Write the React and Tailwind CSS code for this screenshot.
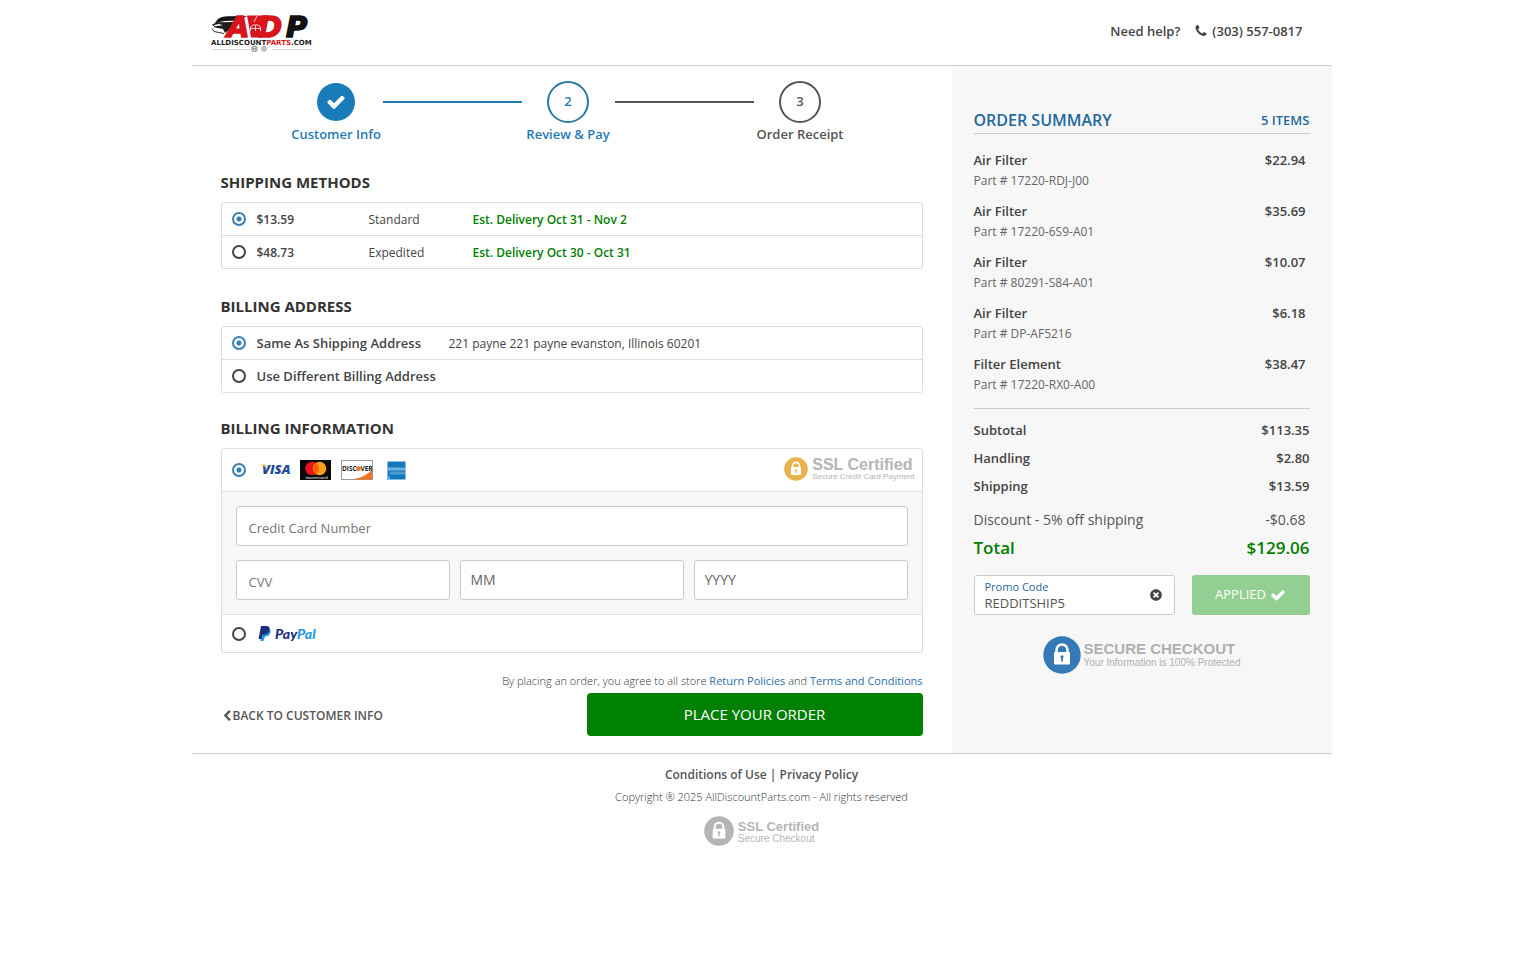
import { useState } from 'react';
import { FaTimesCircle } from 'react-icons/fa';

const steps = [
  { n: 1, label: 'Customer Info', state: 'done' },
  { n: 2, label: 'Review & Pay', state: 'current' },
  { n: 3, label: 'Order Receipt', state: 'todo' },
];

const shippingMethods = [
  { id: 'standard', price: '$13.59', name: 'Standard', eta: 'Est. Delivery Oct 31 - Nov 2' },
  { id: 'expedited', price: '$48.73', name: 'Expedited', eta: 'Est. Delivery Oct 30 - Oct 31' },
];

const items = [
  { name: 'Air Filter', part: '17220-RDJ-J00', price: '$22.94' },
  { name: 'Air Filter', part: '17220-6S9-A01', price: '$35.69' },
  { name: 'Air Filter', part: '80291-S84-A01', price: '$10.07' },
  { name: 'Air Filter', part: 'DP-AF5216', price: '$6.18' },
  { name: 'Filter Element', part: '17220-RX0-A00', price: '$38.47' },
];

const totals = [
  { label: 'Subtotal', value: '$113.35' },
  { label: 'Handling', value: '$2.80' },
  { label: 'Shipping', value: '$13.59' },
];

const stepStyles = {
  done: { text: 'text-[#1f7bb6]', circle: 'w-[38px] h-[38px] bg-[#1a7bb9] text-white' },
  current: { text: 'text-[#1f7bb6]', circle: 'w-[42px] h-[42px] border-2 border-[#2a7ba8] text-[13px] font-semibold' },
  todo: { text: 'text-[#555]', circle: 'w-[42px] h-[42px] border-2 border-[#555] text-[13px] font-semibold' },
};

const icons = {
  check: 'M1671 566q0 40-28 68l-724 724-136 136q-28 28-68 28t-68-28l-136-136-362-362q-28-28-28-68t28-68l136-136q28-28 68-28t68 28l294 295 656-657q28-28 68-28t68 28l136 136q28 28 28 68z',
  chevron: 'M1427 301l-531 531 531 531q19 19 19 45t-19 45l-166 166q-19 19-45 19t-45-19l-742-742q-19-19-19-45t19-45l742-742q19-19 45-19t45 19l166 166q19 19 19 45t-19 45z',
  phone: 'M1600 1240q0 27-10 70.500t-21 68.500q-21 50-122 106-94 51-186 51-27 0-53-3.500t-57.500-12.500-47-14.500-55.500-20.500-49-18q-98-35-175-83-127-79-264-216t-216-264q-48-77-83-175-3-9-18-49t-20.500-55.500-14.500-47-12.500-57.500-3.500-53q0-92 51-186 56-101 106-122 25-11 68.500-21t70.500-10q14 0 21 3 18 6 53 76 11 19 30 54t35 63.500 31 53.500q3 4 17.500 25t21.500 35.500 7 28.500q0 20-28.500 50t-62 55-62 53-28.500 46q0 9 5 22.500t8.500 20.500 14 24 11.500 19q76 137 174 235t235 174q2 1 19 11.500t24 14 20.500 8.500 22.500 5q18 0 46-28.500t53-62 55-62 50-28.500q14 0 28.500 7t35.500 21.500 25 17.500q25 15 53.500 31t63.500 35 54 30q70 35 76 53 3 7 3 21z',
};

const Icon = ({ name, className }) => (
  <svg className={className} viewBox="0 0 1792 1792" fill="currentColor" aria-hidden="true"><path d={icons[name]} /></svg>
);

const Logo = () => (
  <svg className="w-[102px] h-[46px]" viewBox="0 -6 102 46" role="img" aria-label="AllDiscountParts.com">
    {/* car */}
    <path d="M7 6 Q10 3.500 17 3.200 L36 3 L28 7.500 L14 8 Q8 8.500 3 11 Z" fill="#151515" />
    <path d="M1 11.500 L7 9.300 L25 9 L19 16 L14 20 L12 16 L4 14.500 Z" fill="#1c1c1c" />
    <path d="M3 12 L8 11 L12 12.300 L4 13.200 Z M5 16 L12 17.500 L12 19 L6 18 Z" fill="#fff" />
    <path d="M1 15.500 L3 18.500 L13 20.500" fill="none" stroke="#333" />
    <path d="M36 2.600 H57 L51 24.600 H40 Z" fill="#d8151b" />
    <g fontFamily="DejaVu Sans" fontWeight="700" fontStyle="italic" fontSize="29" strokeWidth="1.600">
      <text x="16" y="24" fill="#d8151b" stroke="#d8151b">A</text>
      <text x="47" y="24" fill="#d8151b" stroke="#d8151b">D</text>
      <text x="75" y="24" fill="#111" stroke="#111">P</text>
    </g>
    {/* house */}
    <path d="M39.500 18 v-4 l2.500-2 h5 l2.500 2 v4 M39.500 15.500 h10 M44.500 12.500 v5.500" fill="none" stroke="#fff" strokeWidth="0.800" />
    <path d="M46 3 L43 9" stroke="#fff" strokeWidth="0.800" />
    <text x="0" y="31.500" fontFamily="DejaVu Sans" fontWeight="700" fontSize="7" fill="#222">
      ALLDISCOUNT<tspan fill="#d8151b">PARTS</tspan>.COM
    </text>
    <path d="M1 36.500 h38 M61 36.500 h40" stroke="#ccc" strokeWidth="0.800" />
    <rect x="41" y="33.300" width="5" height="5" rx="1.500" fill="none" stroke="#555" strokeWidth="0.800" />
    <path d="M42.500 34.300 v3 M44.500 34.300 v3 M42.500 35.800 h2" stroke="#555" strokeWidth="0.600" />
    <circle cx="53" cy="35.800" r="2.300" fill="none" stroke="#777" strokeWidth="0.800" />
    <path d="M51.800 36.900 L53 34.400 L54.200 36.900" fill="none" stroke="#777" strokeWidth="0.700" />
  </svg>
);

const LockBadge = ({ color, className }) => (
  <svg className={className} viewBox="0 0 38 38" aria-hidden="true">
    <circle cx="19" cy="19" r="18.700" fill={color} />
    <path d="M13.500 18 v-4 a5.500 5.500 0 0 1 11 0 v4" fill="none" stroke="#fff" strokeWidth="2.600" />
    <rect x="11" y="16" width="16" height="12.500" rx="1" fill="#fff" />
    <circle cx="19" cy="20.800" r="1.600" fill={color} />
    <path d="M18.100 21 h1.800 v4.500 h-1.800 Z" fill={color} />
  </svg>
);

const CardLogos = () => (
  <span className="flex items-center">
    <svg className="w-[31px] h-[20px]" viewBox="0 0 31 20" role="img" aria-label="Visa">
      <text x="2" y="14" fontFamily="Open Sans" fontWeight="800" fontStyle="italic" fontSize="13" fill="#1c4a94">VISA</text>
      <path d="M1 4.500 h4 l2 4 Z" fill="#e9b44c" />
    </svg>
    <svg className="w-[31px] h-[20px] ml-[9px]" viewBox="0 0 31 20" role="img" aria-label="Mastercard">
      <rect width="31" height="20" fill="#0a0a0a" />
      <circle cx="12" cy="8.500" r="6.800" fill="#e8131d" />
      <circle cx="19.500" cy="8.500" r="6.800" fill="#f79e1b" />
      <path d="M15.750 2.800 a6.800 6.800 0 0 1 0 11.400 a6.800 6.800 0 0 1 0 -11.400" fill="#fb5f0a" />
      <text x="5.500" y="18.500" fontFamily="Open Sans" fontWeight="600" fontSize="4" fill="#ddd">mastercard</text>
    </svg>
    <svg className="w-[32px] h-[20px] ml-[10px]" viewBox="0 0 32 20" role="img" aria-label="Discover">
      <rect x="0.500" y="0.500" width="31" height="19" fill="#fff" stroke="#999" />
      <path d="M31 9.500 Q25 17 11 19.500 L31 19.500 Z" fill="#ee7623" />
      <text x="1" y="11" fontFamily="Open Sans" fontWeight="700" fontSize="6.500" fill="#1b1b1b">DISC</text>
      <circle cx="17.500" cy="8.700" r="2.400" fill="#ee7623" />
      <text x="19.500" y="11" fontFamily="Open Sans" fontWeight="700" fontSize="6.500" fill="#1b1b1b">VER</text>
    </svg>
    <svg className="w-[20px] h-[19px] ml-[13px]" viewBox="0 0 20 19" role="img" aria-label="American Express">
      <rect x="1.500" y="0.500" width="18" height="18" fill="#1478be" />
      <path d="M2 6.500 h17 v3 h-17 Z" fill="#6fb1df" />
      <path d="M4 10.500 h15 v3 h-15 Z" fill="#4d9cd4" />
      <path d="M0 19 L4 15 L4 18.500 Z" fill="#7fb9e2" />
    </svg>
  </span>
);

const PayPalLogo = () => (
  <svg className="w-[64px] h-[18px]" viewBox="0 0 64 18" role="img" aria-label="PayPal">
    <path d="M3.500 3.500 h6 Q13.500 4 12.300 8 Q11 11.500 7 11.500 L5.500 16 H2.500 Z" fill="#1f9bde" />
    <path d="M3 1 h6 Q12.500 1.500 11.600 5.500 Q10.500 9.500 6 9.500 H4.500 L3.400 14 H0.500 Z" fill="#1c2f7c" />
    <text x="17" y="14" fontFamily="Lato" fontWeight="900" fontStyle="italic" fontSize="14" fill="#1c2f7c">
      Pay<tspan fill="#1f9bde">Pal</tspan>
    </text>
  </svg>
);

const Radio = (props) => (
  <input
    type="radio"
    className="appearance-none shrink-0 w-[14px] h-[14px] rounded-full border-2 border-[#444] bg-white checked:border-[#3a80b4] checked:bg-[radial-gradient(circle,#2f7db5_2px,transparent_3px)]"
    {...props}
  />
);

const Heading = ({ children }) => <h2 className="text-[15px] leading-5 font-bold text-[#333]">{children}</h2>;

const inputClass = 'h-10 min-w-0 rounded-[3px] border border-[#ccc] bg-white px-3 pt-[3px] text-[13px] text-[#555] placeholder:text-[#777] outline-none';
const selectClass = 'appearance-none h-10 min-w-0 rounded-[3px] border border-[#ccc] bg-white px-[10px] text-sm text-[#666] outline-none';

const App = () => {
  const [shipping, setShipping] = useState('standard');
  const [billing, setBilling] = useState('same');
  const [payment, setPayment] = useState('card');
  const [promo, setPromo] = useState('REDDITSHIP5');

  return (
    <div className="min-h-screen bg-white font-['Open_Sans',sans-serif] text-[#444]">
      <div className="mx-auto max-w-[1140px]">
        <header className="flex h-[66px] items-start justify-between border-b border-[#ccc] pl-[19px] pr-[29px] pt-[7px]">
          <a href="#home"><Logo /></a>
          <div className="flex items-center gap-[14px] pt-[14px] text-[13px] leading-5 font-semibold">
            <span>Need help?</span>
            <a href="tel:3035570817" className="flex items-center gap-1"><Icon name="phone" className="h-[14px] w-[14px]" />(303) 557-0817</a>
          </div>
        </header>

        <div className="flex border-b border-[#ccc]">
          <main className="w-2/3 pl-[29px] pr-[29px] pt-[15px] pb-[17px]">
            {/* Progress */}
            <ol className="flex pl-[69px] pr-[76px]">
              {steps.map((s, i) => (
                <li key={s.n} className={i > 0 ? 'flex flex-1' : 'flex'}>
                  {i > 0 && <span className={`mt-5 h-[2px] flex-1 ${s.state === 'todo' ? 'bg-[#555]' : 'bg-[#1f7bb6]'}`} />}
                  <div className={`flex w-[93px] flex-col items-center ${stepStyles[s.state].text}`}>
                    <div className="flex h-[42px] items-center">
                      <span className={`flex items-center justify-center rounded-full ${stepStyles[s.state].circle}`}>
                        {s.state === 'done' ? <Icon name="check" className="h-5 w-5" /> : s.n}
                      </span>
                    </div>
                    <span className="mt-[1px] whitespace-nowrap text-[13px] leading-5 font-semibold">{s.label}</span>
                  </div>
                </li>
              ))}
            </ol>

            {/* Shipping methods */}
            <section className="mt-7">
              <Heading>SHIPPING METHODS</Heading>
              <div className="mt-[10px] divide-y divide-[#ddd] rounded-[3px] border border-[#ddd] text-xs">
                {shippingMethods.map((m) => (
                  <label key={m.id} className="flex h-[32px] box-content items-center pl-[10px]">
                    <Radio name="shipping" checked={shipping === m.id} onChange={() => setShipping(m.id)} />
                    <span className="ml-[11px] w-[112px] pt-[2px] font-semibold">{m.price}</span>
                    <span className="w-[104px] pt-[2px]">{m.name}</span>
                    <span className="pt-[2px] font-semibold text-[#008000]">{m.eta}</span>
                  </label>
                ))}
              </div>
            </section>

            {/* Billing address */}
            <section className="mt-[27px]">
              <Heading>BILLING ADDRESS</Heading>
              <div className="mt-[10px] divide-y divide-[#ddd] rounded-[3px] border border-[#ddd] text-xs">
                <label className="flex h-[32px] box-content items-center pl-[10px]">
                  <Radio name="billing" checked={billing === 'same'} onChange={() => setBilling('same')} />
                  <span className="ml-[11px] w-[192px] pt-[2px] text-[13px] font-semibold">Same As Shipping Address</span>
                  <span className="pt-[2px]">221 payne 221 payne evanston, Illinois 60201</span>
                </label>
                <label className="flex h-[32px] box-content items-center pl-[10px]">
                  <Radio name="billing" checked={billing === 'different'} onChange={() => setBilling('different')} />
                  <span className="ml-[11px] pt-[2px] text-[13px] font-semibold">Use Different Billing Address</span>
                </label>
              </div>
            </section>

            {/* Billing information */}
            <section className="mt-[25px]">
              <Heading>BILLING INFORMATION</Heading>
              <div className="mt-[10px] rounded-[3px] border border-[#ddd]">
                <div className="flex h-[42px] items-center justify-between pl-[10px] pr-[7px]">
                  <label className="flex items-center gap-[14px]">
                    <Radio name="payment" checked={payment === 'card'} onChange={() => setPayment('card')} />
                    <CardLogos />
                  </label>
                  <div className="flex items-center gap-1 pb-[2px] font-['Liberation_Sans',Arial,sans-serif] text-[#b5b5b5]">
                    <LockBadge color="#eab14d" className="w-6 h-6" />
                    <div>
                      <div className="text-base leading-4 font-bold">SSL Certified</div>
                      <div className="text-[8px] leading-2">Secure Credit Card Payment</div>
                    </div>
                  </div>
                </div>
                <div className="grid grid-cols-[214fr_224fr_214fr] gap-x-[10px] gap-y-[14px] border-y border-[#ddd] bg-[#f7f7f7] p-[14px]">
                  <input aria-label="Credit Card Number" placeholder="Credit Card Number" className={`col-span-3 ${inputClass}`} />
                  <input aria-label="CVV" placeholder="CVV" className={inputClass} />
                  <select aria-label="Expiration month" className={selectClass}><option>MM</option></select>
                  <select aria-label="Expiration year" className={selectClass}><option>YYYY</option></select>
                </div>
                <label className="flex h-[37px] items-center gap-3 pl-[10px]">
                  <Radio name="payment" checked={payment === 'paypal'} onChange={() => setPayment('paypal')} />
                  <PayPalLogo />
                </label>
              </div>
            </section>

            <p className="mt-5 text-right text-[11px] leading-4 font-light text-[#333]">
              By placing an order, you agree to all store <a href="#returns" className="font-normal text-[#1f70a8]">Return Policies</a> and <a href="#terms" className="font-normal text-[#1f70a8]">Terms and Conditions</a>
            </p>
            <div className="mt-1 flex items-center justify-between">
              <a href="#customer-info" className="flex items-center pt-[2px] text-xs font-semibold text-[#555]"><Icon name="chevron" className="h-3 w-3" />BACK TO CUSTOMER INFO</a>
              <button type="button" className="h-[43px] w-[336px] rounded-[4px] bg-[#008000] text-[15px] text-white">PLACE YOUR ORDER</button>
            </div>
          </main>

          {/* Order summary */}
          <aside className="w-1/3 bg-[#f7f7f7] px-[22px] pt-[44px]">
            <div className="flex items-center justify-between border-b border-[#ccc] pb-[3px] font-semibold text-[#1f68a0]">
              <h2 className="text-base leading-5">ORDER SUMMARY</h2>
              <span className="text-[13px] leading-5">5 ITEMS</span>
            </div>
            <ul className="mt-4 border-b border-[#ccc] pb-[3px]">
              {items.map((item) => (
                <li key={item.part} className="flex h-[51px] justify-between pr-1">
                  <div>
                    <p className="text-[13px] leading-5 font-semibold">{item.name}</p>
                    <p className="text-xs leading-[22px] text-[#666]">Part # {item.part}</p>
                  </div>
                  <span className="text-[13px] leading-5 font-semibold">{item.price}</span>
                </li>
              ))}
            </ul>
            <dl className="mt-[7px] text-[13px] font-semibold">
              {totals.map((t) => (
                <div key={t.label} className="flex justify-between leading-7">
                  <dt>{t.label}</dt>
                  <dd>{t.value}</dd>
                </div>
              ))}
              <div className="mt-[6px] flex justify-between pr-1 text-sm leading-7 font-normal text-[#555]">
                <dt>Discount - 5% off shipping</dt>
                <dd>-$0.68</dd>
              </div>
              <div className="flex justify-between text-[17px] leading-7 text-[#008000]">
                <dt>Total</dt>
                <dd>$129.06</dd>
              </div>
            </dl>
            <form className="mt-[13px] flex gap-[17px]" onSubmit={(e) => e.preventDefault()}>
              <div className="flex h-10 min-w-0 flex-1 items-center rounded-[3px] border border-[#ccc] bg-white pl-[10px] pr-3">
                <div className="min-w-0 flex-1">
                  <label htmlFor="promo" className="block text-[11px] leading-4 text-[#1f68a0]">Promo Code</label>
                  <input id="promo" value={promo} onChange={(e) => setPromo(e.target.value)} className="block h-4 w-full text-[13px] leading-4 text-[#555] outline-none" />
                </div>
                <button type="button" aria-label="Clear promo code" onClick={() => setPromo('')}><FaTimesCircle className="text-xs" /></button>
              </div>
              <button type="submit" className="flex h-10 w-[118px] items-center justify-center gap-1 rounded-[3px] bg-[#93cf93] text-[13px] text-white">APPLIED <Icon name="check" className="h-4 w-4" /></button>
            </form>
            <div className="mt-[21px] flex items-center justify-center gap-[3px] font-['Liberation_Sans',Arial,sans-serif] text-[#b0b0b0]">
              <LockBadge color="#337ab7" className="w-[38px] h-[38px]" />
              <div>
                <div className="text-[15px] leading-4 font-bold">SECURE CHECKOUT</div>
                <div className="text-[10px] leading-3">Your Information is 100% Protected</div>
              </div>
            </div>
          </aside>
        </div>

        <footer className="flex flex-col items-center pt-[11px]">
          <p className="text-xs leading-5 font-semibold text-[#555]"><a href="#conditions">Conditions of Use</a> | <a href="#privacy">Privacy Policy</a></p>
          <p className="mt-1 text-[11px] leading-4 font-light text-[#333]">Copyright ® 2025 AllDiscountParts.com - All rights reserved</p>
          <div className="mt-[11px] flex items-center gap-1 font-['Liberation_Sans',Arial,sans-serif] text-[#b5b5b5]">
            <LockBadge color="#b5b5b5" className="w-[30px] h-[30px]" />
            <div className="pt-[3px]">
              <div className="text-[13px] leading-3 font-bold">SSL Certified</div>
              <div className="text-[10px] leading-3">Secure Checkout</div>
            </div>
          </div>
        </footer>
      </div>
    </div>
  );
};

export default App;
